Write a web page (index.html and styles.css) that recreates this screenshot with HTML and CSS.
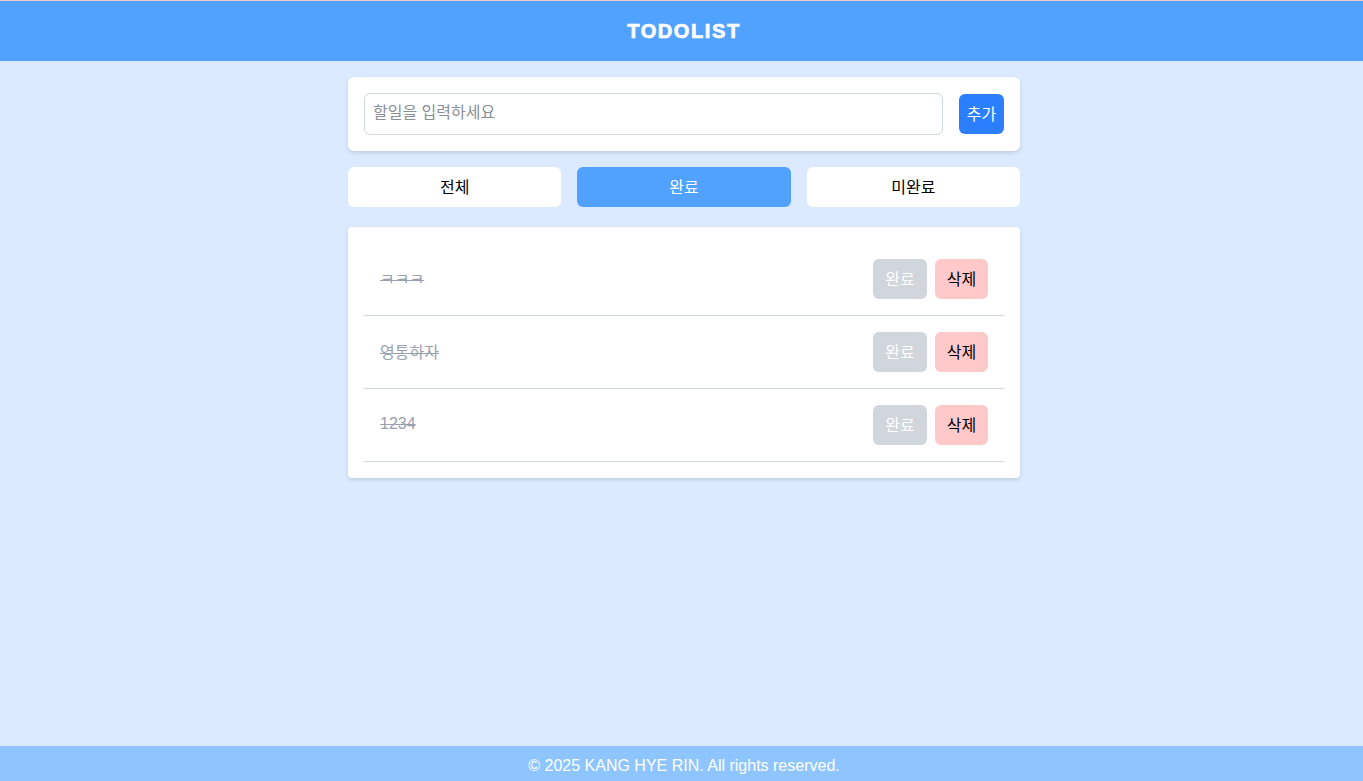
FILE: index.html
```html
<!DOCTYPE html>
<html lang="ko">
<head>
<meta charset="utf-8">
<title>TODOLIST</title>
<link rel="stylesheet" href="styles.css">
</head>
<body>
<div class="topline"></div>
<header class="header"><h1 class="title">TODOLIST</h1></header>
<main class="main">
  <div class="container">
    <form class="add-card">
      <input class="add-input" type="text" placeholder="할일을 입력하세요">
      <button class="add-btn" type="button">추가</button>
    </form>
    <div class="filters">
      <button class="filter" type="button">전체</button>
      <button class="filter active" type="button">완료</button>
      <button class="filter" type="button">미완료</button>
    </div>
    <ul class="list-card">
      <li class="item"><span class="item-text">ㅋㅋㅋ</span><div class="actions"><button class="btn done" type="button">완료</button><button class="btn del" type="button">삭제</button></div></li>
      <li class="item"><span class="item-text">영통하자</span><div class="actions"><button class="btn done" type="button">완료</button><button class="btn del" type="button">삭제</button></div></li>
      <li class="item"><span class="item-text">1234</span><div class="actions"><button class="btn done" type="button">완료</button><button class="btn del" type="button">삭제</button></div></li>
    </ul>
  </div>
</main>
<footer class="footer">© 2025 KANG HYE RIN. All rights reserved.</footer>
</body>
</html>
```
FILE: styles.css
```css
* { box-sizing: border-box; }
html, body { margin: 0; padding: 0; }
body {
  min-height: 100vh;
  display: flex;
  flex-direction: column;
  background: #dbeafe;
  font-family: "Liberation Sans", "Noto Sans CJK KR", sans-serif;
  font-size: 16px;
  color: #000;
}
.topline { height: 1px; background: #f3c9c4; }
.header {
  height: 60px;
  background: #51a2ff;
  display: flex;
  align-items: center;
  justify-content: center;
  padding-left: 5px;
}
.title {
  margin: 0;
  color: #fff;
  font-size: 20px;
  font-weight: 900;
  letter-spacing: 1.6px;
  font-family: "Liberation Sans", sans-serif;
  -webkit-text-stroke: 0.7px #fff;
}
.main { flex: 1; padding: 16px 0 0 5px; }
.container { width: 672px; margin: 0 auto; }
.add-card {
  margin: 0;
  background: #fff;
  border-radius: 6px;
  padding: 16px;
  display: flex;
  align-items: center;
  gap: 16px;
  box-shadow: 0 2px 4px rgba(0,0,0,0.12);
}
.add-input {
  flex: 1;
  height: 42px;
  border: 1px solid #d1d5dc;
  border-radius: 6px;
  padding: 0 8px 2px;
  font: inherit;
  outline: none;
}
.add-input::placeholder { color: #8a8f98; }
.add-btn {
  height: 40px;
  width: 45px;
  border: 0;
  border-radius: 6px;
  background: #2b7fff;
  color: #fff;
  font: inherit;
  padding: 0 0 3px;
}
.filters {
  display: grid;
  grid-template-columns: repeat(3, 1fr);
  gap: 16px;
  margin-top: 16px;
}
.filter {
  height: 40px;
  border: 0;
  border-radius: 6px;
  background: #fff;
  color: #000;
  font: inherit;
  padding: 0 0 2px;
}
.filter.active { background: #51a2ff; color: #fff; }
.list-card {
  list-style: none;
  margin: 20px 0 0;
  padding: 16px;
  background: #fff;
  border-radius: 4px;
  box-shadow: 0 2px 4px rgba(0,0,0,0.12);
}
.item {
  display: flex;
  align-items: center;
  justify-content: space-between;
  padding: 16px;
  border-bottom: 1px solid #d1d5dc;
}
.item-text { color: #99a1af; text-decoration: line-through; margin-top: -3px; }
.actions { display: flex; gap: 8px; }
.btn {
  height: 40px;
  width: 54px;
  border: 0;
  border-radius: 6px;
  font: inherit;
  padding: 0 0 3px;
}
.btn.del { width: 53px; }
.btn.done { background: #d1d5dc; color: #fff; }
.btn.del { background: #ffc9c9; color: #000; }
.footer {
  height: 35px;
  background: #8ec5ff;
  color: #fff;
  display: flex;
  align-items: center;
  justify-content: center;
  padding: 4px 0 0 5px;
}
```
